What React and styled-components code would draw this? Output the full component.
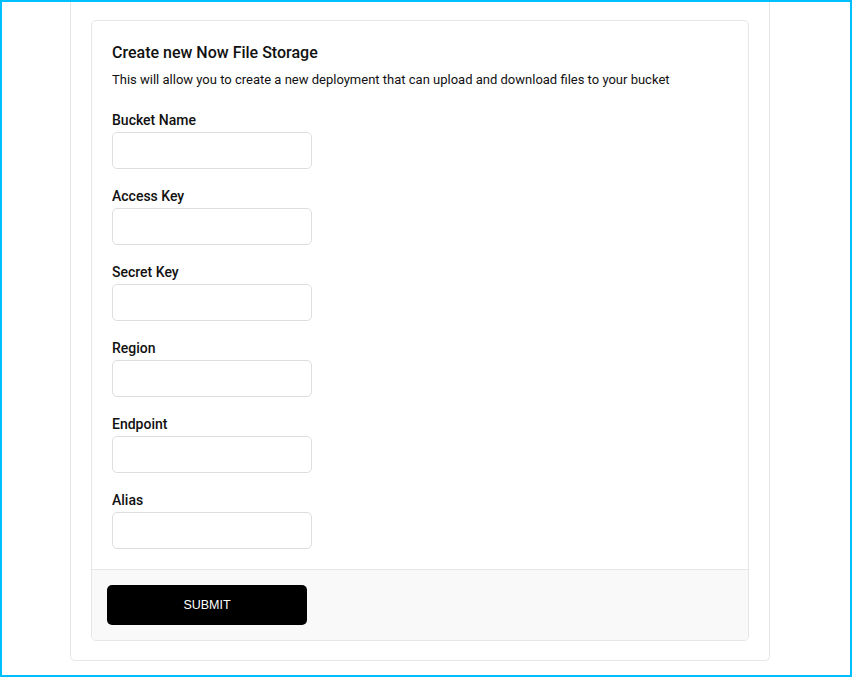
import React from "react";
import styled, { createGlobalStyle } from "styled-components";

const GlobalStyle = createGlobalStyle`
  body {
    margin: 0;
    font-family: Roboto, "Noto Sans", sans-serif;
    color: #111;
    background: #fff;
  }
  * {
    box-sizing: border-box;
  }
`;

const fields = ["Bucket Name", "Access Key", "Secret Key", "Region", "Endpoint", "Alias"];

const App = () => {
  return (
    <>
      <GlobalStyle />
      <StyledFrame>
        <StyledOuter>
          <StyledCard>
            <StyledBody>
              <StyledTitle>Create new Now File Storage</StyledTitle>
              <StyledText>
                This will allow you to create a new deployment that can upload
                and download files to your bucket
              </StyledText>
              <StyledFields>
                {fields.map((name) => (
                  <StyledField key={name}>
                    <StyledLabel>{name}</StyledLabel>
                    <StyledInput type="text" />
                  </StyledField>
                ))}
              </StyledFields>
            </StyledBody>
            <StyledFooter>
              <StyledButton>SUBMIT</StyledButton>
            </StyledFooter>
          </StyledCard>
        </StyledOuter>
      </StyledFrame>
    </>
  );
};

export default App;

const StyledFrame = styled.div`
  height: 677px;
  border: 2px solid #00bfff;
  padding-left: 68px;
  overflow: hidden;
`;

const StyledOuter = styled.div`
  width: 700px;
  border: 1px solid #e6e6e6;
  border-top: none;
  border-radius: 0 0 5px 5px;
  padding: 18px 20px 19px;
`;

const StyledCard = styled.div`
  border: 1px solid #e6e6e6;
  border-radius: 5px;
  overflow: hidden;
`;

const StyledBody = styled.div`
  padding: 22px 20px 20px;
`;

const StyledTitle = styled.h2`
  margin: 0;
  font-size: 16px;
  line-height: 20px;
  font-weight: 500;
`;

const StyledText = styled.p`
  margin: 8px 0 0;
  font-size: 13px;
  line-height: 18px;
`;

const StyledFields = styled.div`
  margin-top: 22px;
  display: flex;
  flex-direction: column;
  gap: 18px;
`;

const StyledField = styled.div`
  display: flex;
  flex-direction: column;
  gap: 3px;
`;

const StyledLabel = styled.label`
  font-size: 14px;
  line-height: 18px;
  font-weight: 500;
`;

const StyledInput = styled.input`
  width: 200px;
  height: 37px;
  border: 1px solid #dedede;
  border-radius: 5px;
  outline: none;
  padding: 0 10px;
  font-family: inherit;
`;

const StyledFooter = styled.div`
  background: #f9f9f9;
  border-top: 1px solid #e6e6e6;
  padding: 15px;
`;

const StyledButton = styled.button`
  width: 200px;
  height: 40px;
  border: none;
  border-radius: 5px;
  background: #000;
  color: #fff;
  font-family: "Liberation Sans", Arial, sans-serif;
  font-size: 12.5px;
  cursor: pointer;
`;
